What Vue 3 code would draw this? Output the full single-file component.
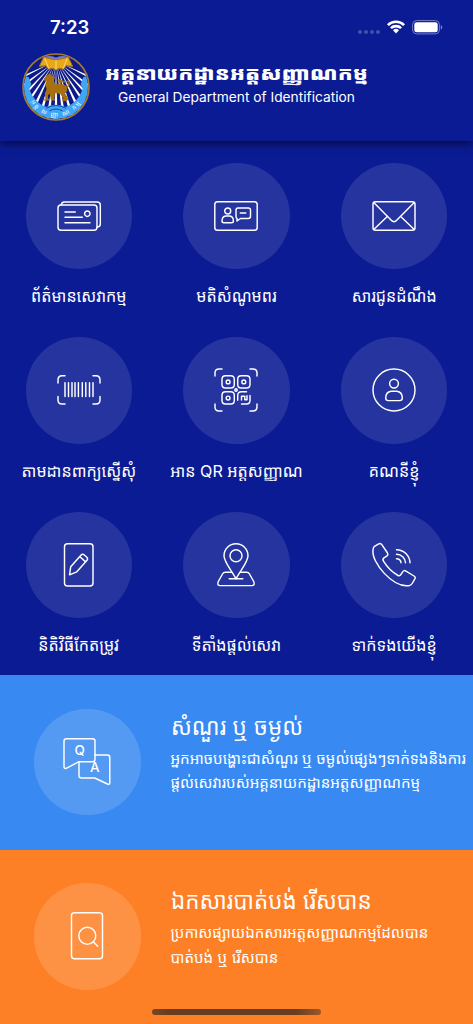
<template>
  <div class="app-screen">
    <header class="header">
      <div class="status-bar">
        <span class="time">7:23</span>
        <div class="status-icons">
          <span class="signal"><i v-for="n in 4" :key="n"></i></span>
          <svg class="wifi" viewBox="0 0 18 14">
            <path d="M0 4.2a12.8 12.8 0 0 1 18 0L16.2 6a10.2 10.2 0 0 0-14.4 0z" />
            <path d="M3 7.3a8.5 8.5 0 0 1 12 0L13.2 9.1a6 6 0 0 0-8.4 0z" />
            <path d="M6 10.3a4.3 4.3 0 0 1 6 0L9 13.5z" />
          </svg>
          <svg class="battery" viewBox="0 0 31 15">
            <rect x=".6" y=".6" width="26.8" height="13.3" rx="4" class="battery-shell" />
            <rect x="2.3" y="2.3" width="23.4" height="9.9" rx="2.5" />
            <path d="M28.8 5v4.6c2-.8 2-3.8 0-4.6z" class="battery-cap" />
          </svg>
        </div>
      </div>
      <div class="brand">
        <svg class="emblem" viewBox="36 37 204 204">
          <defs>
            <clipPath id="disc"><circle cx="138" cy="139" r="96" /></clipPath>
            <path id="ribbon" d="M54 160A86 86 0 0 0 222 160" />
          </defs>
          <circle cx="138" cy="139" r="99" fill="#0d1b88" />
          <g clip-path="url(#disc)">
            <path v-for="a in rays" :key="a" class="ray" d="M138 76L133 240H143z" :transform="`rotate(${a} 138 60)`" />
            <path class="ribbon" d="M38 103L56 110 64 130 58 146Q72 186 108 199Q138 186 168 199Q204 186 218 146L212 130 220 110 238 103V245H38z" />
            <path d="M108 203q30-17 60 0M118 211q20-12 40 0" class="wave" />
          </g>
          <text class="ribbon-text"><textPath href="#ribbon" startOffset="50%" text-anchor="middle">អត្ត ស ញ្ញា ណ កម្ម</textPath></text>
          <path d="M102 49Q123 42 138 51Q153 42 174 49L166 62H110z" fill="#777ac5" />
          <path class="book" d="M101 50L138 58 175 50 188 77 168 75 160 86Q148 79 138 88Q128 79 116 86L108 75 88 77z" />
          <path class="book-line" d="M138 58V87M104 51L116 84M172 51L160 84" />
          <path class="lion" d="M105 112L112 104 119 101 127 106 133 109 130 123 137 132 157 132 169 137 170 151 164 158 173 174 170 180H158L162 174 151 158 133 156 132 174 135 178H124L121 157 112 163 113 174 117 178H103L108 175 106 158 112 147 107 132 112 121 104 119z" />
          <path class="tail" d="M151 132V119Q164 127 176 121Q180 133 172 139M143 120L151 116" />
          <circle cx="138" cy="139" r="99" class="ring" />
        </svg>
        <div class="brand-text">
          <h1>អគ្គនាយកដ្ឋានអត្តសញ្ញាណកម្ម</h1>
          <p>General Department of Identification</p>
        </div>
      </div>
    </header>

    <main class="menu">
      <div v-for="item in items" :key="item.label" class="menu-item">
        <div class="bubble">
          <svg class="icon" viewBox="-24 -24 48 48">
            <path v-for="(d, i) in item.paths" :key="i" :d="d" />
          </svg>
        </div>
        <span class="menu-label">{{ item.label }}</span>
      </div>
    </main>

    <section class="banner banner-blue">
      <div class="bubble">
        <svg class="icon" viewBox="-24 -24 48 48">
          <path d="M-20.5-23.3H5.5Q8-23.3 8-20.8V-2.8Q8-.3 5.5-.3H-8L-20.8 6.3Q-23 7-23 4.8V-20.8Q-23-23.3-20.5-23.3z" />
          <path d="M8-7H20.3Q22.8-7 22.8-4.5V20.5Q22.8 23 20.5 22L7.7 16H-5.5Q-8 16-8 13.5V-.3" />
          <text x="-7.3" y="-6.8">Q</text>
          <text x="7.7" y="10.2">A</text>
        </svg>
      </div>
      <div class="banner-text">
        <h2>សំណួរ ឬ ចម្ងល់</h2>
        <p>អ្នកអាចបង្ហោះជាសំណួរ ឬ ចម្ងល់ផ្សេងៗទាក់ទងនិងការ<br />ផ្តល់សេវារបស់អគ្គនាយកដ្ឋានអត្តសញ្ញាណកម្ម</p>
      </div>
    </section>

    <section class="banner banner-orange">
      <div class="bubble">
        <svg class="icon" viewBox="-24 -24 48 48">
          <rect x="-15.5" y="-23.2" width="31" height="46" rx="3" />
          <circle cx=".3" cy="-.3" r="8.5" />
          <path d="M6.3 5.7L10.7 10.2" />
        </svg>
      </div>
      <div class="banner-text">
        <h2>ឯកសារបាត់បង់ រើសបាន</h2>
        <p>ប្រកាសផ្សាយឯកសារអត្តសញ្ញាណកម្មដែលបាន<br />បាត់បង់ ឬ រើសបាន</p>
      </div>
    </section>
    <div class="home-indicator"></div>
  </div>
</template>

<script setup>
// Angles of the emblem's light rays
const rays = [-64, -53, -43, -34, -25, -16, -8, 0, 8, 16, 25, 34, 43, 53, 64]

// Icon paths are centred on 0,0
const items = [
  {
    label: 'ព័ត៌មានសេវាកម្ម',
    paths: [
      'M-18-11H15Q18-11 18-8V11Q18 14.3 15 14.3H-18Q-21 14.3-21 11V-8Q-21-11-18-11z',
      'M-18-11Q-17-14-15-14H18Q21.3-14 21.3-11V8Q21.3 11 18 11',
      'M-14-4H-3.7M-14 1.3H3.3M-14 6.7H11',
      'M11-2.3a2.7 2.7 0 1 1-5.4 0a2.7 2.7 0 1 1 5.4 0',
    ],
  },
  {
    label: 'មតិសំណូមពរ',
    paths: [
      'M-18.5-14.3H18.5Q21.2-14.3 21.2-11.5V11.5Q21.2 14.3 18.5 14.3H-18.5Q-21.2 14.3-21.2 11.5V-11.5Q-21.2-14.3-18.5-14.3z',
      'M-5.3-5a3 3 0 1 1-6 0a3 3 0 1 1 6 0',
      'M-10.3 0H-6.3Q-2.6.5-2.6 5Q-2.6 6.8-4.5 6.8H-12Q-14 6.8-14 5Q-14 .5-10.3 0z',
      'M2-8H12.3Q14.5-8 14.5-5.8V.3Q14.5 2.5 12.3 2.5H4.5L1 5V2.5Q0 2 0 .3V-5.8Q0-8 2-8zM4.3-3H9.8',
    ],
  },
  {
    label: 'សារជូនដំណឹង',
    paths: [
      'M-18.5-14.3H18.5Q21-14.3 21-11.8V11.8Q21 14.3 18.5 14.3H-18.5Q-21 14.3-21 11.8V-11.8Q-21-14.3-18.5-14.3z',
      'M-20-13.3L-3 4Q0 7.5 3 4L20-13.3',
      'M-20 13.3L-6.7.5M20 13.3L6.7.5',
    ],
  },
  {
    label: 'តាមដានពាក្យស្នើសុំ',
    paths: [
      'M-21-7V-10Q-21-14.3-17-14.3H-14M14-14.3H17Q21-14.3 21-10V-7M21 6.5V10Q21 14 17 14H14M-14 14H-17Q-21 14-21 10V6.5',
      'M-14-7.4V6.6M-10.5-7.4V6.6M-7-7.4V6.6M-4-7.4V6.6M-.6-7.4V6.6M3.3-7.4V6.6M6.8-7.4V6.6M10.5-7.4V6.6M14-7.4V6.6',
    ],
  },
  {
    label: 'អាន QR អត្តសញ្ញាណ',
    paths: [
      'M-21-14V-17Q-21-21-17-21H-14M14-21H17Q21-21 21-17V-14M21 14V17Q21 21 17 21H14M-14 21H-17Q-21 21-21 17V14',
      'M-10.5-14.2H-5.2Q-1.7-14.2-1.7-10.7V-5.5Q-1.7-2-5.2-2H-10.5Q-14-2-14-5.5V-10.7Q-14-14.2-10.5-14.2z',
      'M5.2-14.2H10.5Q14-14.2 14-10.7V-5.5Q14-2 10.5-2H5.2Q1.7-2 1.7-5.5V-10.7Q1.7-14.2 5.2-14.2z',
      'M-10.5 1.8H-5.2Q-1.7 1.8-1.7 5.3V10.5Q-1.7 14-5.2 14H-10.5Q-14 14-14 10.5V5.3Q-14 1.8-10.5 1.8z',
      'M-6-8.1a1.9 1.9 0 1 1-3.8 0a1.9 1.9 0 1 1 3.8 0M9.7-8.1a1.9 1.9 0 1 1-3.8 0a1.9 1.9 0 1 1 3.8 0M-6 8a1.9 1.9 0 1 1-3.8 0a1.9 1.9 0 1 1 3.8 0M1.2 0a1.2 1.2 0 1 1-2.4 0a1.2 1.2 0 1 1 2.4 0',
      'M1.7 10.3V5.5Q1.7 1.8 5.4 1.8H10.5M14 5.5V10.5Q14 14 10.5 14H5.5M5.5 10V6.3H8.8V9.8H11V5.8',
    ],
  },
  {
    label: 'គណនីខ្ញុំ',
    paths: [
      'M21 0a21 21 0 1 1-42 0a21 21 0 1 1 42 0',
      'M4.4-6.4a4.4 4.4 0 1 1-8.8 0a4.4 4.4 0 1 1 8.8 0',
      'M-3 1.2H3Q8.3 2 8.3 8Q8.3 10.6 5.5 10.6H-5.5Q-8.3 10.6-8.3 8Q-8.3 2-3 1.2z',
    ],
  },
  {
    label: 'និតិវិធីកែតម្រូវ',
    paths: [
      'M-11.5-21.3H11Q14-21.3 14-18.3V18Q14 21 11 21H-11.5Q-14.5 21-14.5 18V-18.3Q-14.5-21.3-11.5-21.3z',
      'M-9.5 9.8L-8.3 1.8L1.7-9.6Q3.5-11.5 5.3-10L7.8-7.8Q9.3-6.3 7.8-4.4L-2.2 6.8zM.9-8.2L6.4-3.4',
    ],
  },
  {
    label: 'ទីតាំងផ្តល់សេវា',
    paths: [
      'M0 13.8C-4 6-12-3-12-9.3A12 12 0 0 1 12-9.3C12-3 4 6 0 13.8z',
      'M6-9.3a6 6 0 1 1-12 0a6 6 0 1 1 12 0',
      'M-4.5 7.2H-10.5Q-12.5 7.2-13.5 9L-17.7 16.5Q-19.5 20.6-15.5 20.6H15.5Q19.5 20.6 17.7 16.5L13.5 9Q12.5 7.2 10.5 7.2H4.5M-6.8 13.8H6.8',
    ],
  },
  {
    label: 'ទាក់ទងយើងខ្ញុំ',
    paths: [
      'M-19.5-18.7L-15.3-21.2Q-13.3-22.2-12-20.2L-6.5-12Q-5.5-10.3-7-9.2L-10-7.2Q-11.8-6-10.5-3.8Q-4.7 5.7 4 10.5Q5.8 11.4 6.8 9.7L8.8 6.7Q10 4.8 12 6.1L20 11Q22 12.2 20.7 14.2L18.5 18Q17.5 20 15.5 20.5C-1 23.5-23-3-21-15Q-20.8-17.5-19.5-18.7z',
      'M2.5-15.3A13.5 13.5 0 0 1 16-2.3M2.5-10.8A9 9 0 0 1 11.5-2.3M2.5-6.3A4.5 4.5 0 0 1 7-2.3',
    ],
  },
]
</script>

<style>
body {
  background: #0b1b93;
}
</style>

<style scoped>
.app-screen {
  position: relative;
  width: 473px;
  height: 1024px;
  overflow: hidden;
  background: #0b1b93;
  color: #fff;
  font-family: Inter, "Noto Sans Khmer", "Noto Sans", "DejaVu Sans", sans-serif;
}

.header {
  height: 140.5px;
  box-shadow: 0 3px 8px rgba(0, 0, 0, 0.55);
}

.status-bar {
  display: flex;
  justify-content: space-between;
  height: 51px;
  padding: 0 30px 0 50px;
  box-sizing: border-box;
}

.time {
  padding-top: 15px;
  font-size: 18.5px;
  line-height: 24px;
  font-weight: 600;
}

.status-icons {
  display: flex;
  align-items: flex-start;
  padding-top: 20px;
}

.signal {
  display: flex;
  gap: 2px;
  padding-top: 10px;
}

.signal i {
  width: 4px;
  height: 4px;
  border-radius: 50%;
  background: #4350ac;
}

.wifi {
  width: 18px;
  height: 14px;
  margin: 0 7px;
  fill: #fff;
}

.battery {
  width: 31px;
  height: 15px;
  fill: #fff;
}

.battery-shell {
  fill: none;
  stroke: #7580c4;
}

.battery .battery-cap {
  fill: #7580c4;
}

.brand {
  display: flex;
  padding-left: 22px;
}

.emblem {
  width: 68px;
  height: 68px;
  margin-top: 1.5px;
  overflow: visible;
}

.ray {
  fill: #fff;
}

.ribbon {
  fill: #41a5f6;
}

.ribbon-text {
  fill: #fff;
  font-size: 18px;
  letter-spacing: 5px;
}

.wave,
.book-line {
  fill: none;
  stroke: #174bb0;
  stroke-width: 3;
}

.book {
  fill: #eaa817;
  stroke: #a8720c;
  stroke-width: 3;
}

.book-line {
  stroke: #fbd784;
}

.lion {
  fill: #a8710e;
  stroke: #a8710e;
  stroke-width: 3;
}

.tail {
  fill: none;
  stroke: #a8710e;
  stroke-width: 4;
}

.ring {
  fill: none;
  stroke: #a57b31;
  stroke-width: 5;
}

.brand-text {
  display: flex;
  flex-direction: column;
  align-items: center;
  width: 261px;
  margin-left: 16px;
  white-space: nowrap;
}

.brand-text h1 {
  margin: 8px 0 0;
  font-size: 18.5px;
  line-height: 28px;
  font-weight: 900;
  transform: scaleX(1.15);
}

.brand-text p {
  margin: 1px 0 0;
  font-size: 13.75px;
  line-height: 18px;
}

.menu {
  display: grid;
  grid-template-columns: repeat(3, 1fr);
  grid-auto-rows: 174.5px;
  height: 534.5px;
  padding-top: 22px;
  box-sizing: border-box;
}

.menu-item {
  display: flex;
  flex-direction: column;
  align-items: center;
}

.bubble {
  display: flex;
  flex: none;
  align-items: center;
  justify-content: center;
  width: 106.5px;
  height: 106.5px;
  border-radius: 50%;
  background: rgba(255, 255, 255, 0.11);
}

.icon {
  width: 48px;
  height: 48px;
  overflow: visible;
  fill: none;
  stroke: #fff;
  stroke-width: 1.45;
  stroke-linecap: round;
  stroke-linejoin: round;
}

.icon text {
  fill: #fff;
  stroke: none;
  font-size: 13.5px;
  font-weight: 500;
  text-anchor: middle;
}

.menu-label {
  margin-top: 13px;
  font-size: 16.1px;
  line-height: 28px;
  white-space: nowrap;
}

.banner {
  display: flex;
  height: 174.5px;
  padding: 33.5px 0 0 34px;
  box-sizing: border-box;
}

.banner .bubble {
  background: rgba(255, 255, 255, 0.14);
}

.banner-blue {
  background: #388af2;
}

.banner-orange {
  background: #fe8026;
}

.banner-text {
  padding-left: 30px;
  white-space: nowrap;
}

.banner-text h2 {
  margin: 0;
  font-size: 24px;
  line-height: 36px;
  font-weight: 400;
  transform: scaleX(0.935);
  transform-origin: left;
}

.banner-text p {
  margin: 2px 0 0;
  font-size: 15.1px;
  line-height: 24.5px;
}

.home-indicator {
  position: absolute;
  left: 152px;
  bottom: 9px;
  width: 169px;
  height: 6px;
  border-radius: 3px;
  background: linear-gradient(90deg, #784722, #663d20 10%, #663d20 85%, #9b582a);
}
</style>
